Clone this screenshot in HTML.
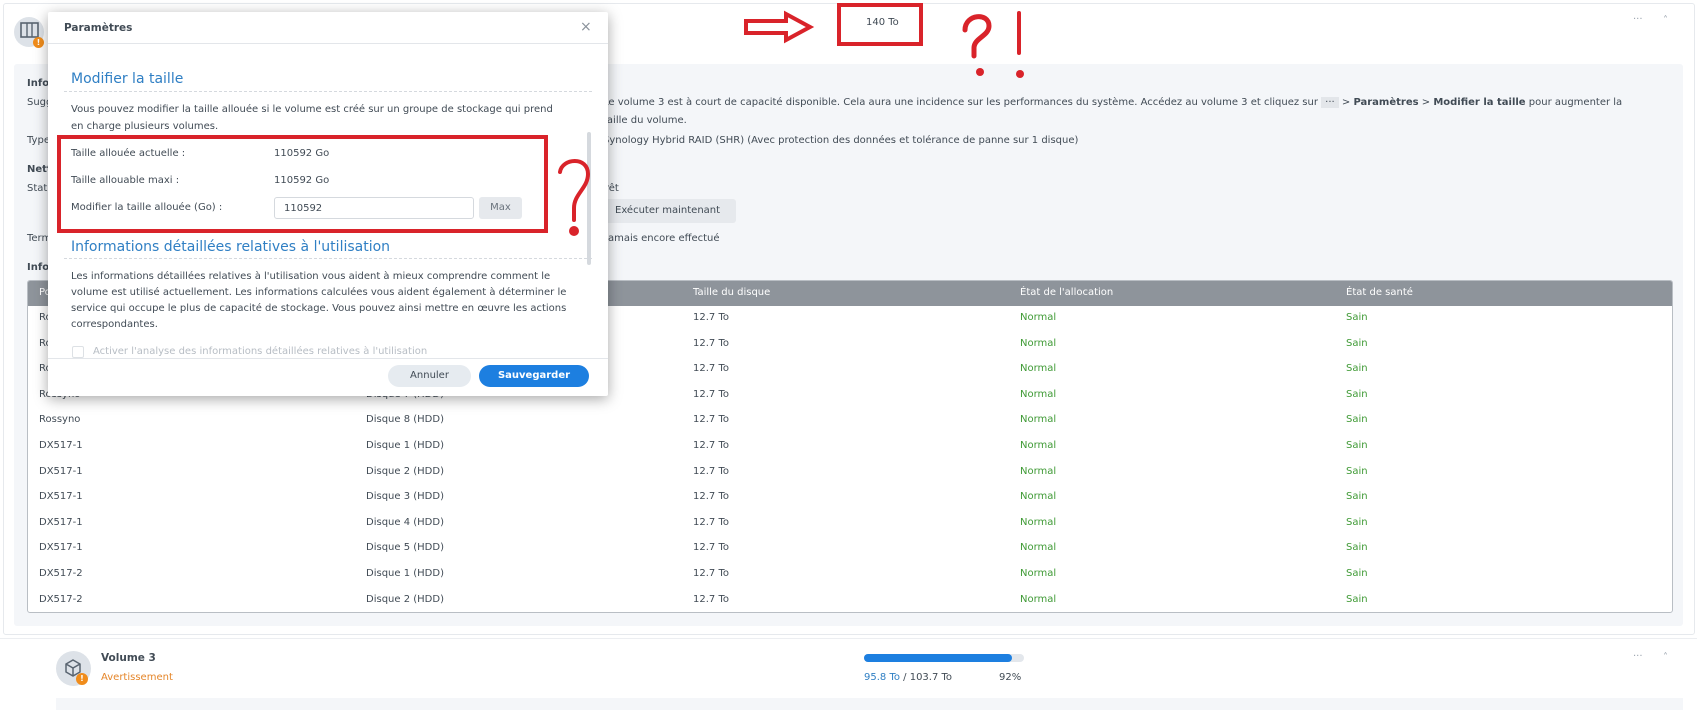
<!DOCTYPE html>
<html><head><meta charset="utf-8"><style>
*{margin:0;padding:0;box-sizing:border-box}
body{width:1697px;height:709px;overflow:hidden;background:#fff;font-family:"DejaVu Sans","Liberation Sans",sans-serif;font-size:10px;color:#414b55;position:relative}
.a{position:absolute;white-space:nowrap}
.g{color:#3f9a35}
.card{position:absolute;left:3px;top:3px;width:1692px;height:632px;border:1px solid #e6e9ed;border-radius:3px}
.panel{position:absolute;left:14px;top:64px;width:1669px;height:562px;background:#f4f6f9;border-radius:3px}
.tbl{position:absolute;left:27px;top:280px;width:1646px;height:333px;background:#fff;border:1px solid #b9bec4;border-radius:3px;overflow:hidden}
.th{position:absolute;left:0;top:0;width:100%;height:25px;background:#8e949b}
.th span{position:absolute;top:6px;color:#fff}
.dlg{position:absolute;left:48px;top:12px;width:560px;height:384px;background:#fff;box-shadow:0 3px 14px rgba(0,0,0,.35);border-radius:2px}
.dl{color:#414b55}
.red{position:absolute;border:4px solid #d9232a}
</style></head><body>
<div class="card"></div>
<div class="a" style="left:14px;top:17px;width:30px;height:30px;border-radius:50%;background:#dde2e8"></div>
<svg class="a" style="left:20px;top:22px" width="20" height="18"><rect x="1" y="1" width="17" height="14" fill="none" stroke="#596470" stroke-width="1.6"/><path d="M7 1v14M12 1v14" stroke="#596470" stroke-width="1.4"/></svg>
<div class="a" style="left:33px;top:37px;width:11px;height:11px;border-radius:50%;background:#f08c1b;color:#fff;font-size:8px;text-align:center;line-height:11px;font-weight:bold">!</div>
<div class="a" style="left:866px;top:17px">140 To</div>
<div class="a" style="left:1633px;top:14px;color:#9aa3ad">···</div>
<div class="a" style="left:1663px;top:15px;color:#9aa3ad">˄</div>
<div class="panel"></div>
<div class="a" style="left:27px;top:78px;font-weight:bold">Informations générales</div>
<div class="a" style="left:27px;top:97px">Suggestion :</div>
<div class="a" style="left:603px;top:97px">Le volume 3 est à court de capacité disponible. Cela aura une incidence sur les performances du système. Accédez au volume 3 et cliquez sur <span style="background:#e3e6ea;padding:0 4px">···</span> &gt; <b>Paramètres</b> &gt; <b>Modifier la taille</b> pour augmenter la</div>
<div class="a" style="left:603px;top:115px">taille du volume.</div>
<div class="a" style="left:27px;top:135px">Type :</div>
<div class="a" style="left:603px;top:135px">Synology Hybrid RAID (SHR) (Avec protection des données et tolérance de panne sur 1 disque)</div>
<div class="a" style="left:27px;top:164px;font-weight:bold">Nettoyage des données</div>
<div class="a" style="left:27px;top:183px">Statut :</div>
<div class="a" style="left:599px;top:183px">Prêt</div>
<div class="a" style="left:596px;top:199px;width:140px;height:24px;background:#e6e9ed;border-radius:3px;padding:6px 0 0 19px">Exécuter maintenant</div>
<div class="a" style="left:27px;top:233px">Terminé :</div>
<div class="a" style="left:605px;top:233px">Jamais encore effectué</div>
<div class="a" style="left:27px;top:262px;font-weight:bold">Informations sur les disques</div>
<div class="tbl">
<div class="th"><span style="left:11px">Position</span><span style="left:338px">Disque</span><span style="left:665px">Taille du disque</span><span style="left:992px">État de l'allocation</span><span style="left:1318px">État de santé</span></div>
</div>
<div id="rows"></div>
<script>
var r=[["Rossyno","Disque 4 (HDD)"],["Rossyno","Disque 5 (HDD)"],["Rossyno","Disque 6 (HDD)"],["Rossyno","Disque 7 (HDD)"],["Rossyno","Disque 8 (HDD)"],["DX517-1","Disque 1 (HDD)"],["DX517-1","Disque 2 (HDD)"],["DX517-1","Disque 3 (HDD)"],["DX517-1","Disque 4 (HDD)"],["DX517-1","Disque 5 (HDD)"],["DX517-2","Disque 1 (HDD)"],["DX517-2","Disque 2 (HDD)"]];
var h="";for(var i=0;i<r.length;i++){var y=312+i*25.6;h+='<div class="a" style="left:39px;top:'+y+'px">'+r[i][0]+'</div><div class="a" style="left:366px;top:'+y+'px">'+r[i][1]+'</div><div class="a" style="left:693px;top:'+y+'px">12.7 To</div><div class="a g" style="left:1020px;top:'+y+'px">Normal</div><div class="a g" style="left:1346px;top:'+y+'px">Sain</div>';}
document.getElementById("rows").innerHTML=h;
</script>
<div class="a" style="left:56px;top:651px;width:35px;height:35px;border-radius:50%;background:#dde2e8"></div>
<svg class="a" style="left:63px;top:658px" width="20" height="20"><path d="M10 2l7 4v8l-7 4-7-4V6z M3 6l7 4 7-4 M10 10v8" fill="none" stroke="#596470" stroke-width="1.5"/></svg>
<div class="a" style="left:76px;top:673px;width:12px;height:12px;border-radius:50%;background:#f08c1b;color:#fff;font-size:8px;text-align:center;line-height:12px;font-weight:bold">!</div>
<div class="a" style="left:101px;top:652px;font-weight:bold;font-size:10.5px">Volume 3</div>
<div class="a" style="left:101px;top:672px;color:#e5862a">Avertissement</div>
<div class="a" style="left:864px;top:654px;width:160px;height:8px;background:#e3e7ec;border-radius:4px"><div style="width:148px;height:8px;background:#1d7fe0;border-radius:4px"></div></div>
<div class="a" style="left:864px;top:672px"><span style="color:#2f7fc4">95.8 To</span> / 103.7 To</div>
<div class="a" style="left:999px;top:672px">92%</div>
<div class="a" style="left:1633px;top:651px;color:#9aa3ad">···</div>
<div class="a" style="left:1663px;top:652px;color:#9aa3ad">˄</div>
<div class="a" style="left:56px;top:698px;width:1627px;height:12px;background:#f4f6f9"></div>
<div class="a" style="left:0;top:638px;width:1697px;height:1px;background:#eceef1"></div>

<div class="dlg">
<div class="a" style="left:16px;top:10px;font-weight:bold;font-size:10.5px">Paramètres</div>
<div class="a" style="left:532px;top:7px;font-size:14px;color:#8a929b">×</div>
<div class="a" style="left:0;top:31px;width:560px;height:1px;background:#e3e6ea"></div>
<div class="a" style="left:23px;top:59px;font-size:14px;color:#2f7fc4">Modifier la taille</div>
<div class="a" style="left:16px;top:79px;width:528px;border-top:1px dashed #d5d9de"></div>
<div class="a dl" style="left:23px;top:92px">Vous pouvez modifier la taille allouée si le volume est créé sur un groupe de stockage qui prend</div>
<div class="a dl" style="left:23px;top:109px">en charge plusieurs volumes.</div>
<div class="a dl" style="left:23px;top:136px">Taille allouée actuelle :</div><div class="a dl" style="left:226px;top:136px">110592 Go</div>
<div class="a dl" style="left:23px;top:163px">Taille allouable maxi :</div><div class="a dl" style="left:226px;top:163px">110592 Go</div>
<div class="a dl" style="left:23px;top:190px">Modifier la taille allouée (Go) :</div>
<div class="a" style="left:226px;top:185px;width:200px;height:22px;border:1px solid #d5d9de;border-radius:3px;padding:5px 0 0 9px">110592</div>
<div class="a" style="left:431px;top:185px;width:43px;height:22px;background:#e6e9ed;border-radius:3px;text-align:center;padding-top:5px;color:#6a737d">Max</div>
<div class="a" style="left:539px;top:120px;width:4px;height:133px;background:#d5d9de;border-radius:2px"></div>
<div class="a" style="left:23px;top:227px;font-size:14px;color:#2f7fc4">Informations détaillées relatives à l'utilisation</div>
<div class="a" style="left:16px;top:246px;width:528px;border-top:1px dashed #d5d9de"></div>
<div class="a dl" style="left:23px;top:259px">Les informations détaillées relatives à l'utilisation vous aident à mieux comprendre comment le</div>
<div class="a dl" style="left:23px;top:275px">volume est utilisé actuellement. Les informations calculées vous aident également à déterminer le</div>
<div class="a dl" style="left:23px;top:291px">service qui occupe le plus de capacité de stockage. Vous pouvez ainsi mettre en œuvre les actions</div>
<div class="a dl" style="left:23px;top:307px">correspondantes.</div>
<div class="a" style="left:24px;top:334px;width:12px;height:12px;border:1px solid #dde1e5;border-radius:2px"></div>
<div class="a" style="left:45px;top:334px;color:#b7bdc4">Activer l'analyse des informations détaillées relatives à l'utilisation</div>
<div class="a" style="left:0;top:346px;width:560px;height:1px;background:#e3e6ea"></div>
<div class="a" style="left:340px;top:353px;width:83px;height:22px;background:#e6ebf0;border-radius:11px;text-align:center;padding-top:5px">Annuler</div>
<div class="a" style="left:431px;top:353px;width:110px;height:22px;background:#1d7fe0;border-radius:11px;text-align:center;padding-top:5px;color:#fff;font-weight:bold">Sauvegarder</div>
</div>

<div class="red" style="left:57px;top:135px;width:491px;height:98px"></div>
<div class="red" style="left:837px;top:3px;width:86px;height:43px"></div>
<svg class="a" style="left:0;top:0" width="1697" height="709">
<path d="M746 21h40v-7l24 13-24 13v-7h-40z" fill="none" stroke="#d9232a" stroke-width="4"/>
<path d="M965 30c0-16 24-18 24-4 0 10-15 12-15 22v8" fill="none" stroke="#d9232a" stroke-width="5" stroke-linecap="round"/>
<circle cx="980" cy="72" r="4" fill="#d9232a"/>
<path d="M1019 13v40" stroke="#d9232a" stroke-width="4" stroke-linecap="round"/>
<circle cx="1020" cy="74" r="4" fill="#d9232a"/>
<path d="M560 172c2-14 28-16 28 2 0 14-14 20-14 34v12" fill="none" stroke="#d9232a" stroke-width="4" stroke-linecap="round"/>
<circle cx="574" cy="231" r="5" fill="#d9232a"/>
</svg>
</body></html>
